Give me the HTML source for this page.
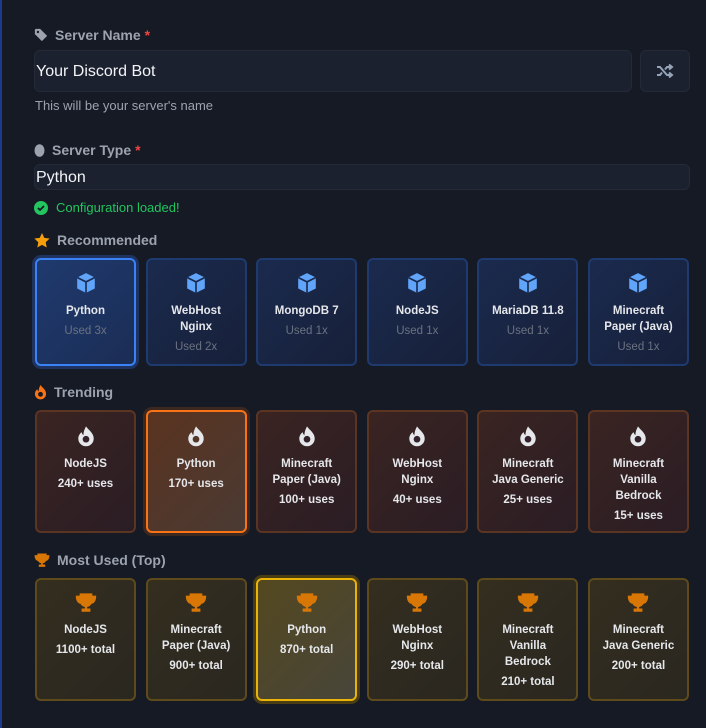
<!DOCTYPE html>
<html><head><meta charset="utf-8"><style>
*{box-sizing:border-box;margin:0;padding:0}
body{width:706px;height:728px;background:#151a25;font-family:"Liberation Sans",sans-serif;position:relative;overflow:hidden;color:#e5e7eb}
.edge{position:absolute;left:0;top:0;width:2px;height:728px;background:#1e3a8a}
.lbl{position:absolute;left:34px;font-size:14px;font-weight:bold;color:#9ca3af;display:flex;align-items:center;gap:7px}
.lbl .req{color:#ef4444;margin-left:-3px}
.input{position:absolute;background:#1c2130;border:1px solid #242a38;border-radius:6px;color:#f3f4f6}
.grid{position:absolute;left:35px;display:flex;gap:9.6px}
.card{width:101px;border-radius:6px;display:flex;flex-direction:column;align-items:center;padding-top:12px;text-align:center;font-size:11.5px;font-weight:bold;color:#e5e7eb;line-height:16px}
.card svg{margin-bottom:9px}
.rec{height:108px;border:2px solid #1e3a6e;background:linear-gradient(135deg,#1a2a4e,#172039)}
.rec .s{color:#6b7280;font-weight:normal;margin-top:4px}
.rec.sel{border-color:#3b82f6;background:linear-gradient(135deg,#1f3a6e,#1b2d55);box-shadow:0 0 0 3px #1e3360}
.tr{height:123px;border:2px solid #5b3422;background:linear-gradient(135deg,#3a2422,#2a1d24);padding-top:13px}
.tr.sel{border-color:#f97316;background:linear-gradient(135deg,#5a3320,#4a3a33);box-shadow:0 0 0 3px #3d2820}
.mu{height:123px;border:2px solid #5e4a1a;background:linear-gradient(135deg,#342e1f,#2a2720);padding-top:13px}
.mu.sel{border-color:#eab308;background:linear-gradient(135deg,#54481f,#48453a);box-shadow:0 0 0 3px #4a3d14}
.tr .s,.mu .s{margin-top:4px}
</style></head><body>
<div class="edge"></div>
<div class="lbl" style="top:27px"><svg width="14" height="14" viewBox="0 0 16 16"><path d="M1 2v5l8 8 6-6-8-8H2z" fill="#9ca3af"/><circle cx="4.5" cy="4.5" r="1.4" fill="#151a25"/></svg>Server Name <span class="req">*</span></div>
<div class="input" style="left:34px;top:50px;width:598px;height:42px;font-size:16px;padding:12px 0 0 1px">Your Discord Bot</div>
<div class="input" style="left:640px;top:50px;width:50px;height:42px;display:flex;align-items:center;justify-content:center"><svg width="18" height="14" viewBox="0 0 18 14" fill="none" stroke="#94a3b8" stroke-width="2"><path d="M1 3h3l7 8h4M1 11h3l2-2.5M9 5.5L11 3h4"/><path d="M13 0.5l3 2.5-3 2.5M13 8.5l3 2.5-3 2.5" fill="#94a3b8"/></svg></div>
<div style="position:absolute;left:35px;top:98px;font-size:13px;color:#9ca3af">This will be your server's name</div>
<div class="lbl" style="top:142px"><svg width="11" height="14" viewBox="0 0 11 14"><ellipse cx="5.5" cy="7.5" rx="5" ry="6.3" fill="#9ca3af"/></svg>Server Type <span class="req">*</span></div>
<div class="input" style="left:34px;top:164px;width:656px;height:26px;font-size:16px;padding:4px 0 0 1px">Python</div>
<div style="position:absolute;left:34px;top:200px;font-size:13px;color:#22c55e;display:flex;align-items:center;gap:8px"><svg width="14" height="14" viewBox="0 0 14 14"><circle cx="7" cy="7" r="7" fill="#22c55e"/><path d="M4 7l2 2 4-4" stroke="#151a25" stroke-width="1.8" fill="none"/></svg>Configuration loaded!</div>
<div class="lbl" style="top:232px"><svg width="16" height="15" viewBox="0 0 24 23"><path d="M12 0l3.5 7.5 8.2 1-6 5.7 1.5 8.1L12 18.3l-7.2 4 1.5-8.1-6-5.7 8.2-1z" fill="#f59e0b"/></svg>Recommended</div>
<div class="grid" style="top:258px">
<div class="card rec sel"><svg width="22" height="22" viewBox="0 0 20 20"><path d="M10 1l8 4v10l-8 4-8-4V5z" fill="#60a5fa"/><path d="M2 5l8 4 8-4M10 9v10" stroke="#1b2d55" stroke-width="1.5" fill="none"/></svg>Python<div class="s">Used 3x</div></div>
<div class="card rec"><svg width="22" height="22" viewBox="0 0 20 20"><path d="M10 1l8 4v10l-8 4-8-4V5z" fill="#60a5fa"/><path d="M2 5l8 4 8-4M10 9v10" stroke="#1a2a4e" stroke-width="1.5" fill="none"/></svg>WebHost<br>Nginx<div class="s">Used 2x</div></div>
<div class="card rec"><svg width="22" height="22" viewBox="0 0 20 20"><path d="M10 1l8 4v10l-8 4-8-4V5z" fill="#60a5fa"/><path d="M2 5l8 4 8-4M10 9v10" stroke="#1a2a4e" stroke-width="1.5" fill="none"/></svg>MongoDB 7<div class="s">Used 1x</div></div>
<div class="card rec"><svg width="22" height="22" viewBox="0 0 20 20"><path d="M10 1l8 4v10l-8 4-8-4V5z" fill="#60a5fa"/><path d="M2 5l8 4 8-4M10 9v10" stroke="#1a2a4e" stroke-width="1.5" fill="none"/></svg>NodeJS<div class="s">Used 1x</div></div>
<div class="card rec"><svg width="22" height="22" viewBox="0 0 20 20"><path d="M10 1l8 4v10l-8 4-8-4V5z" fill="#60a5fa"/><path d="M2 5l8 4 8-4M10 9v10" stroke="#1a2a4e" stroke-width="1.5" fill="none"/></svg>MariaDB 11.8<div class="s">Used 1x</div></div>
<div class="card rec"><svg width="22" height="22" viewBox="0 0 20 20"><path d="M10 1l8 4v10l-8 4-8-4V5z" fill="#60a5fa"/><path d="M2 5l8 4 8-4M10 9v10" stroke="#1a2a4e" stroke-width="1.5" fill="none"/></svg>Minecraft<br>Paper (Java)<div class="s">Used 1x</div></div>
</div>
<div class="lbl" style="top:384px"><svg width="13" height="16" viewBox="0 0 14 17"><path d="M7 1C9 4 13 6 13 10.5A6 6 0 0 1 1 10.5C1 8 2.5 6.5 3.5 5.5 4 7 5 8 5 8 5 5 6 3 7 1z" fill="#f97316"/><circle cx="7" cy="11" r="2.6" fill="#151a25"/></svg>Trending</div>
<div class="grid" style="top:410px">
<div class="card tr"><svg width="18" height="22" viewBox="0 0 14 17"><path d="M7 1C9 4 13 6 13 10.5A6 6 0 0 1 1 10.5C1 8 2.5 6.5 3.5 5.5 4 7 5 8 5 8 5 5 6 3 7 1z" fill="#e5e7eb"/><circle cx="7" cy="11" r="2.6" fill="#33222a"/></svg>NodeJS<div class="s">240+ uses</div></div>
<div class="card tr sel"><svg width="18" height="22" viewBox="0 0 14 17"><path d="M7 1C9 4 13 6 13 10.5A6 6 0 0 1 1 10.5C1 8 2.5 6.5 3.5 5.5 4 7 5 8 5 8 5 5 6 3 7 1z" fill="#e5e7eb"/><circle cx="7" cy="11" r="2.6" fill="#523628"/></svg>Python<div class="s">170+ uses</div></div>
<div class="card tr"><svg width="18" height="22" viewBox="0 0 14 17"><path d="M7 1C9 4 13 6 13 10.5A6 6 0 0 1 1 10.5C1 8 2.5 6.5 3.5 5.5 4 7 5 8 5 8 5 5 6 3 7 1z" fill="#e5e7eb"/><circle cx="7" cy="11" r="2.6" fill="#33222a"/></svg>Minecraft<br>Paper (Java)<div class="s">100+ uses</div></div>
<div class="card tr"><svg width="18" height="22" viewBox="0 0 14 17"><path d="M7 1C9 4 13 6 13 10.5A6 6 0 0 1 1 10.5C1 8 2.5 6.5 3.5 5.5 4 7 5 8 5 8 5 5 6 3 7 1z" fill="#e5e7eb"/><circle cx="7" cy="11" r="2.6" fill="#33222a"/></svg>WebHost<br>Nginx<div class="s">40+ uses</div></div>
<div class="card tr"><svg width="18" height="22" viewBox="0 0 14 17"><path d="M7 1C9 4 13 6 13 10.5A6 6 0 0 1 1 10.5C1 8 2.5 6.5 3.5 5.5 4 7 5 8 5 8 5 5 6 3 7 1z" fill="#e5e7eb"/><circle cx="7" cy="11" r="2.6" fill="#33222a"/></svg>Minecraft<br>Java Generic<div class="s">25+ uses</div></div>
<div class="card tr"><svg width="18" height="22" viewBox="0 0 14 17"><path d="M7 1C9 4 13 6 13 10.5A6 6 0 0 1 1 10.5C1 8 2.5 6.5 3.5 5.5 4 7 5 8 5 8 5 5 6 3 7 1z" fill="#e5e7eb"/><circle cx="7" cy="11" r="2.6" fill="#33222a"/></svg>Minecraft<br>Vanilla<br>Bedrock<div class="s">15+ uses</div></div>
</div>
<div class="lbl" style="top:552px"><svg width="16" height="15" viewBox="0 0 20 18"><path d="M5 1h10v6a5 5 0 0 1-10 0z M5 3H1.5c0 4 2 6 4 6M15 3h3.5c0 4-2 6-4 6" fill="#d97706" stroke="#d97706" stroke-width="1.5"/><path d="M9 11h2v3h3v3H6v-3h3z" fill="#d97706"/></svg>Most Used (Top)</div>
<div class="grid" style="top:578px">
<div class="card mu"><svg width="22" height="20" viewBox="0 0 20 18"><path d="M5 1h10v6a5 5 0 0 1-10 0z M5 3H1.5c0 4 2 6 4 6M15 3h3.5c0 4-2 6-4 6" fill="#d97706" stroke="#d97706" stroke-width="1.5"/><path d="M9 11h2v3h3v3H6v-3h3z" fill="#d97706"/></svg>NodeJS<div class="s">1100+ total</div></div>
<div class="card mu"><svg width="22" height="20" viewBox="0 0 20 18"><path d="M5 1h10v6a5 5 0 0 1-10 0z M5 3H1.5c0 4 2 6 4 6M15 3h3.5c0 4-2 6-4 6" fill="#d97706" stroke="#d97706" stroke-width="1.5"/><path d="M9 11h2v3h3v3H6v-3h3z" fill="#d97706"/></svg>Minecraft<br>Paper (Java)<div class="s">900+ total</div></div>
<div class="card mu sel"><svg width="22" height="20" viewBox="0 0 20 18"><path d="M5 1h10v6a5 5 0 0 1-10 0z M5 3H1.5c0 4 2 6 4 6M15 3h3.5c0 4-2 6-4 6" fill="#d97706" stroke="#d97706" stroke-width="1.5"/><path d="M9 11h2v3h3v3H6v-3h3z" fill="#d97706"/></svg>Python<div class="s">870+ total</div></div>
<div class="card mu"><svg width="22" height="20" viewBox="0 0 20 18"><path d="M5 1h10v6a5 5 0 0 1-10 0z M5 3H1.5c0 4 2 6 4 6M15 3h3.5c0 4-2 6-4 6" fill="#d97706" stroke="#d97706" stroke-width="1.5"/><path d="M9 11h2v3h3v3H6v-3h3z" fill="#d97706"/></svg>WebHost<br>Nginx<div class="s">290+ total</div></div>
<div class="card mu"><svg width="22" height="20" viewBox="0 0 20 18"><path d="M5 1h10v6a5 5 0 0 1-10 0z M5 3H1.5c0 4 2 6 4 6M15 3h3.5c0 4-2 6-4 6" fill="#d97706" stroke="#d97706" stroke-width="1.5"/><path d="M9 11h2v3h3v3H6v-3h3z" fill="#d97706"/></svg>Minecraft<br>Vanilla<br>Bedrock<div class="s">210+ total</div></div>
<div class="card mu"><svg width="22" height="20" viewBox="0 0 20 18"><path d="M5 1h10v6a5 5 0 0 1-10 0z M5 3H1.5c0 4 2 6 4 6M15 3h3.5c0 4-2 6-4 6" fill="#d97706" stroke="#d97706" stroke-width="1.5"/><path d="M9 11h2v3h3v3H6v-3h3z" fill="#d97706"/></svg>Minecraft<br>Java Generic<div class="s">200+ total</div></div>
</div>
</body></html>
